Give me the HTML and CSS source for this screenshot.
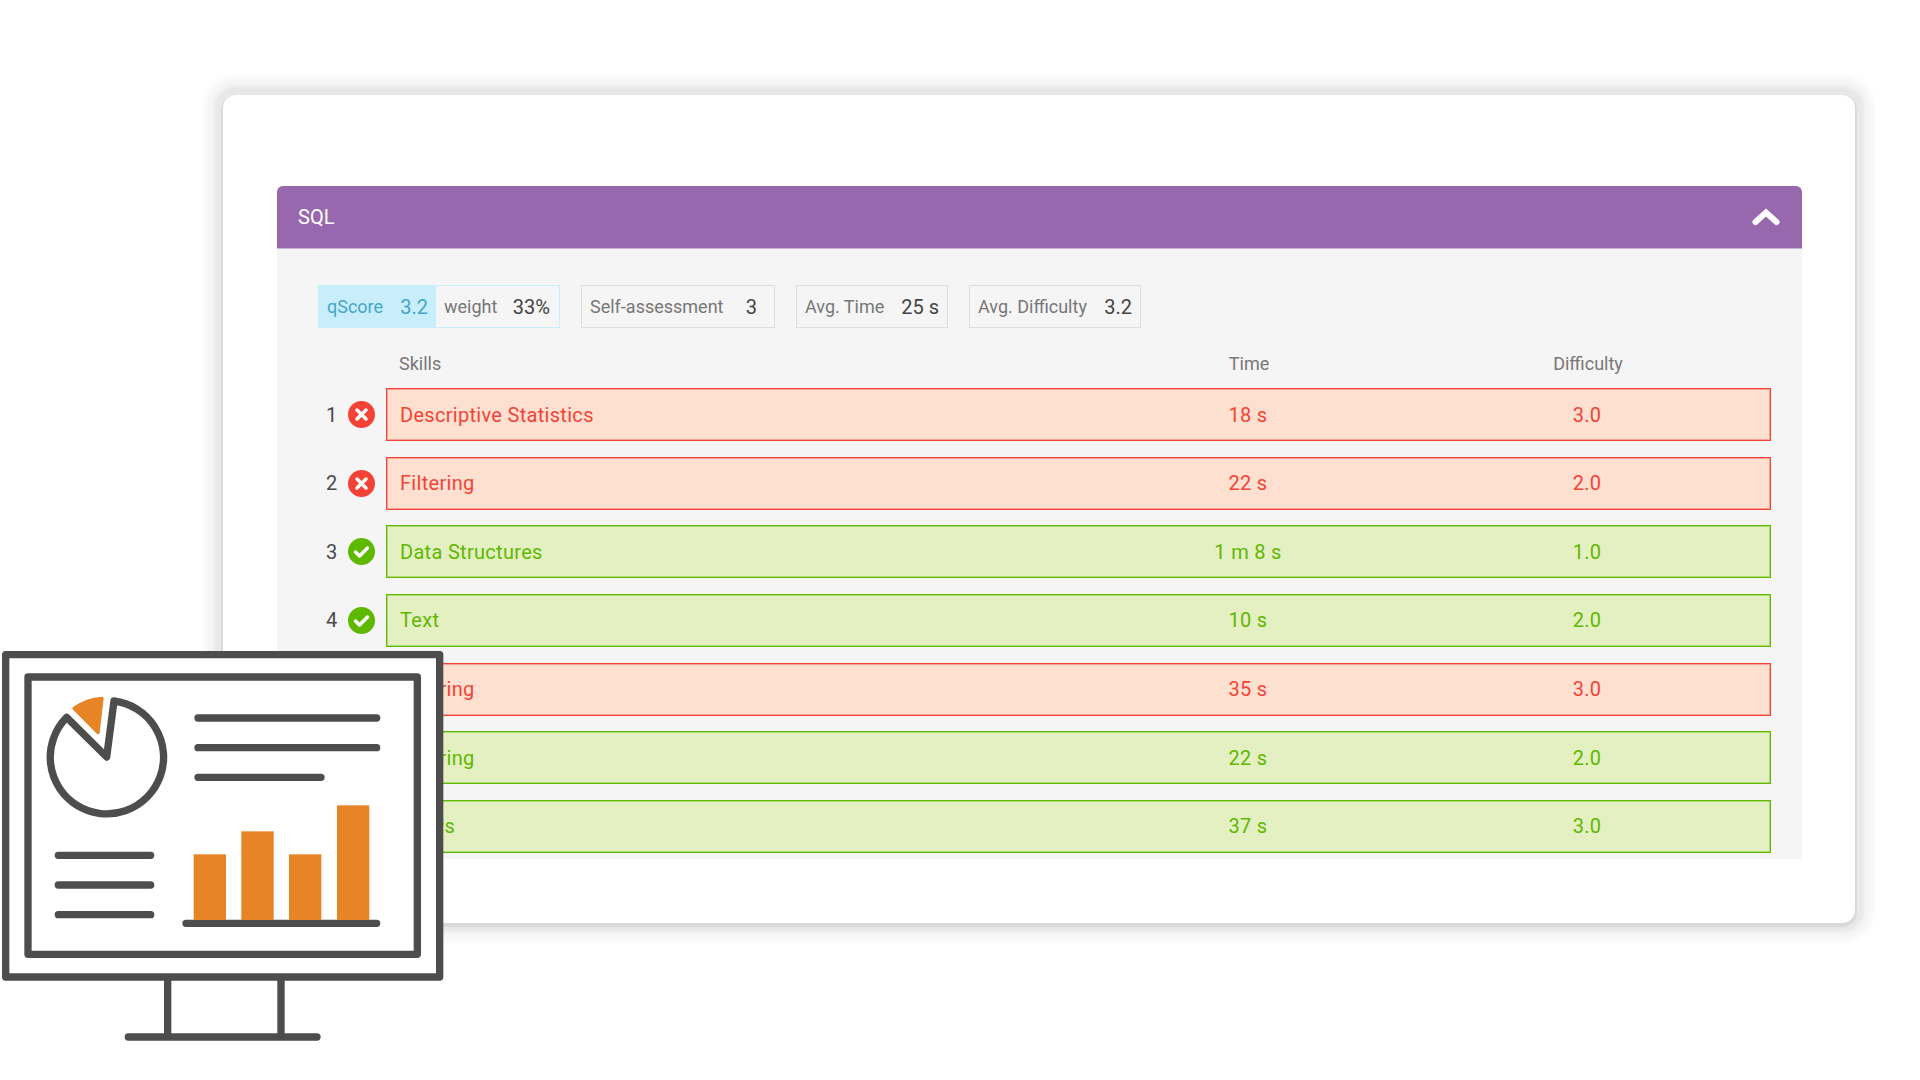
FILE: index.html
```html
<!DOCTYPE html>
<html lang="en">
<head>
  <meta charset="UTF-8" />
  <title>SQL skills report</title>
  <link rel="stylesheet" href="styles.css">
</head>
<body>
  <div class="card">
    <div class="panel">
      <div class="panel-head">
        <span>SQL</span>
        <svg class="chevron" viewBox="0 0 28 18"><polyline points="3.5,14 14,4.5 24.500,14"/></svg>
      </div>
      <div class="panel-body">
        <div class="stats">
          <div class="stat stat-score">
            <span class="score-part"><span class="label">qScore</span><b>3.2</b></span>
            <span class="weight-part"><span class="label">weight</span><b>33%</b></span>
          </div>
          <div class="stat stat-self"><span class="label">Self-assessment</span><b>3</b></div>
          <div class="stat stat-time"><span class="label">Avg. Time</span><b>25 s</b></div>
          <div class="stat stat-diff"><span class="label">Avg. Difficulty</span><b>3.2</b></div>
        </div>

        <div class="cols">
          <span>Skills</span>
          <span class="mid">Time</span>
          <span></span>
          <span class="mid">Difficulty</span>
        </div>

        <div class="line">
          <span class="num">1</span>
          <svg class="mark" viewBox="0 0 27 27"><circle class="bad" cx="13.5" cy="13.5" r="13.5"/><path d="M9 9l9 9M18 9l-9 9"/></svg>
          <div class="row row-bad"><span>Descriptive Statistics</span><span class="mid">18 s</span><span></span><span class="mid">3.0</span></div>
        </div>
        <div class="line">
          <span class="num">2</span>
          <svg class="mark" viewBox="0 0 27 27"><circle class="bad" cx="13.5" cy="13.5" r="13.5"/><path d="M9 9l9 9M18 9l-9 9"/></svg>
          <div class="row row-bad"><span>Filtering</span><span class="mid">22 s</span><span></span><span class="mid">2.0</span></div>
        </div>
        <div class="line">
          <span class="num">3</span>
          <svg class="mark" viewBox="0 0 27 27"><circle class="good" cx="13.5" cy="13.5" r="13.500"/><path d="M7.500 14l4 4 8-8"/></svg>
          <div class="row row-good"><span>Data Structures</span><span class="mid">1 m 8 s</span><span></span><span class="mid">1.0</span></div>
        </div>
        <div class="line">
          <span class="num">4</span>
          <svg class="mark" viewBox="0 0 27 27"><circle class="good" cx="13.5" cy="13.5" r="13.500"/><path d="M7.500 14l4 4 8-8"/></svg>
          <div class="row row-good"><span>Text</span><span class="mid">10 s</span><span></span><span class="mid">2.0</span></div>
        </div>
        <div class="line">
          <span class="num">5</span>
          <svg class="mark" viewBox="0 0 27 27"><circle class="bad" cx="13.5" cy="13.5" r="13.5"/><path d="M9 9l9 9M18 9l-9 9"/></svg>
          <div class="row row-bad"><span>Filtering</span><span class="mid">35 s</span><span></span><span class="mid">3.0</span></div>
        </div>
        <div class="line">
          <span class="num">6</span>
          <svg class="mark" viewBox="0 0 27 27"><circle class="good" cx="13.5" cy="13.5" r="13.500"/><path d="M7.500 14l4 4 8-8"/></svg>
          <div class="row row-good"><span>Filtering</span><span class="mid">22 s</span><span></span><span class="mid">2.0</span></div>
        </div>
        <div class="line">
          <span class="num">7</span>
          <svg class="mark" viewBox="0 0 27 27"><circle class="good" cx="13.5" cy="13.5" r="13.500"/><path d="M7.500 14l4 4 8-8"/></svg>
          <div class="row row-good"><span>Views</span><span class="mid">37 s</span><span></span><span class="mid">3.0</span></div>
        </div>
      </div>
    </div>
  </div>

  <!-- monitor sits over the lower left corner of the card -->
  <svg class="monitor" viewBox="0 0 1440 1260">
    <g class="dark">
      <path d="M503 1010V1191M843 1010V1191M385 1191H951"/>
      <rect class="fill" x="17" y="44" width="1302" height="967"/>
      <rect x="84" y="111" width="1168" height="832"/>
      <path d="M200 232L320 351L342 183A170 170 0 1 1 200 232Z"/>
      <path d="M594 234H1130M594 323H1130M594 412H963M175 646H452M175 735H452M175 824H452M558 850H1130"/>
    </g>
    <g class="orange">
      <path d="M222 205Q260 178 306 175L294 278Z"/>
      <rect x="581" y="643" width="97" height="197"/>
      <rect x="724" y="574" width="97" height="266"/>
      <rect x="867" y="643" width="97" height="197"/>
      <rect x="1011" y="496" width="97" height="344"/>
    </g>
  </svg>
</body>
</html>
```
FILE: styles.css
```css
* {
  box-sizing: border-box;
}
html, body {
  margin: 0;
  height: 1080px;
  overflow: hidden;
}
body {
  position: relative;
  background: white;
  font-family: Roboto, "Liberation Sans", sans-serif;
}
.card {
  width: 1632px;
  height: 828px;
  margin: 95px 0 0 223px;
  padding: 91px 53px 0 54px;
  background: white;
  border-radius: 13px;
  box-shadow: 0 2px 1px 2px #d9d9d9, 0 0 3px 9px #e8e8e8, 0 0 6px 18px #f5f5f5;
}
.panel {
  height: 673px;
  background: #f5f5f5;
  border-radius: 6px 6px 0 0;
}
.panel-head {
  display: flex;
  align-items: center;
  justify-content: space-between;
  height: 63px;
  padding: 0 22px 0 21px;
  background: #9768ad;
  border-bottom: 1px solid #c9b5d3;
  border-radius: 6px 6px 0 0;
  color: white;
  font-size: 20px;
}
.chevron {
  width: 28px;
  height: 18px;
}
.chevron polyline {
  fill: none;
  stroke: white;
  stroke-width: 6;
  stroke-linecap: round;
}
.panel-body {
  padding: 36px 31px 0 41px;
}
.stats {
  display: flex;
  gap: 21px;
  height: 43px;
  margin-bottom: 25px;
}
.stat {
  display: flex;
  align-items: center;
  justify-content: space-between;
  padding: 0 8px;
  border: 1px solid #dedede;
  color: #444;
  font-size: 20px;
}
.stat b {
  font-weight: 400;
}
.label {
  color: #777;
  font-size: 18px;
}
.stat-score {
  width: 242px;
  padding: 0;
  border-color: #c8eefc;
}
.stat-self {
  width: 194px;
  padding-right: 17px;
}
.stat-time {
  width: 152px;
}
.stat-diff {
  width: 172px;
}
.score-part, .weight-part {
  display: flex;
  align-items: center;
  justify-content: space-between;
  height: 100%;
}
.score-part {
  width: 117px;
  padding: 0 8px;
  background: #c8eefc;
  color: #45a5c8;
}
.score-part .label {
  color: #45a5c8;
}
.weight-part {
  flex: 1;
  padding: 0 9px 0 8px;
}
.cols, .row {
  display: grid;
  grid-template-columns: 748px 200px 139px 200px;
}
.cols {
  grid-template-columns: 750px 200px 139px 200px;
  margin-left: 68px;
  padding-left: 13px;
  margin-bottom: 14px;
  height: 21px;
  line-height: 21px;
  color: #777;
  font-size: 18px;
}
.mid {
  text-align: center;
}
.line {
  display: flex;
  align-items: center;
  height: 53px;
  margin-bottom: 15.67px;
}
.num {
  width: 30px;
  padding-left: 8px;
  color: #4a4a4a;
  font-size: 20px;
}
.mark {
  width: 27px;
  height: 27px;
  margin-right: 11px;
}
.mark path {
  fill: none;
  stroke: white;
  stroke-width: 3.500;
  stroke-linecap: round;
  stroke-linejoin: round;
}
.bad {
  fill: #f44336;
}
.good {
  fill: #5fb800;
}
.row {
  flex: 1;
  align-items: center;
  height: 53px;
  padding-left: 13px;
  border: 1px solid;
  font-size: 20px;
  letter-spacing: 0.3px;
}
.row-bad {
  background: #fee0d0;
  border-color: #f44336;
  color: #f44336;
  box-shadow: inset 0 0 0 1px rgba(244, 67, 54, 0.4);
}
.row-good {
  background: #e4f0c2;
  border-color: #5fb800;
  color: #5fb800;
  box-shadow: inset 0 0 0 1px rgba(95, 184, 0, 0.4);
}
.monitor {
  position: absolute;
  left: 0;
  top: 640px;
  width: 480px;
  height: 420px;
}
.dark {
  fill: none;
  stroke: #4d4d4d;
  stroke-width: 22;
  stroke-linecap: round;
  stroke-linejoin: round;
}
.dark .fill {
  fill: white;
}
.orange {
  fill: #e78425;
}
.orange path {
  stroke: #e78425;
  stroke-width: 10;
  stroke-linejoin: round;
}
```
